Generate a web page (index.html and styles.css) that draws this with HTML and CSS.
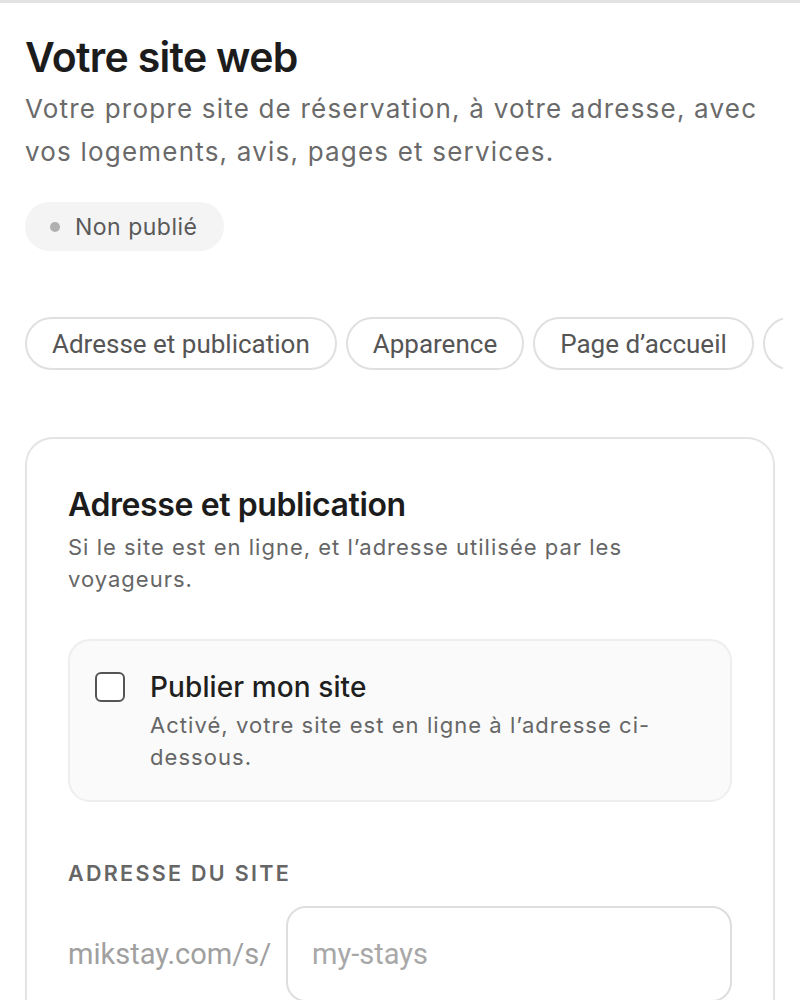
FILE: index.html
```html
<!DOCTYPE html>
<html lang="fr">
<head>
<meta charset="utf-8">
<title>Votre site web</title>
<link rel="stylesheet" href="styles.css">
</head>
<body>
<div class="page">
  <header class="intro">
    <h1 class="title">Votre site web</h1>
    <p class="lead">Votre propre site de réservation, à votre adresse, avec vos logements, avis, pages et services.</p>
    <span class="status"><span class="dot"></span>Non publié</span>
  </header>

  <nav class="tabs">
    <button class="tab">Adresse et publication</button>
    <button class="tab">Apparence</button>
    <button class="tab">Page d’accueil</button>
    <button class="tab">Logements</button>
  </nav>

  <section class="card">
    <h2 class="card-title">Adresse et publication</h2>
    <p class="card-desc">Si le site est en ligne, et l’adresse utilisée par les voyageurs.</p>

    <label class="option">
      <span class="check"></span>
      <span class="option-text">
        <span class="option-title">Publier mon site</span>
        <span class="option-desc">Activé, votre site est en ligne à l’adresse ci-dessous.</span>
      </span>
    </label>

    <div class="field">
      <div class="field-label">ADRESSE DU SITE</div>
      <div class="url-row">
        <span class="prefix">mikstay.com/s/</span>
        <div class="input"><span class="placeholder">my-stays</span></div>
      </div>
    </div>
  </section>
</div>
</body>
</html>
```

FILE: styles.css
```css
* { box-sizing: border-box; }
html { overflow: hidden; height: 1000px; }
html, body { margin: 0; padding: 0; background: #fff; }
body {
  font-family: Inter, "Noto Sans", sans-serif;
  color: #1e1e1e;
  border-top: 3px solid #e2e2e2;
  overflow: hidden;
  height: 1000px;
}
.page { padding: 28px 0 0 25px; }

.title {
  margin: 0;
  font-size: 41px;
  font-weight: 600;
  letter-spacing: -0.7px;
  line-height: 52px;
  color: #1c1c1c;
}
.lead {
  margin: 4px 0 0;
  font-size: 26px;
  letter-spacing: 1.2px;
  line-height: 43px;
  color: #6a6a6a;
  max-width: 760px;
}
.status {
  margin-top: 29px;
  display: inline-flex;
  align-items: center;
  gap: 15px;
  height: 49px;
  padding: 0 26px 0 25px;
  border-radius: 25px;
  background: #f4f4f4;
  font-size: 23px;
  letter-spacing: 0.5px;
  color: #595959;
}
.dot { width: 10px; height: 10px; border-radius: 50%; background: #b0b0b0; }

.tabs {
  margin-top: 66px;
  width: 758px;
  display: flex;
  gap: 9px;
  overflow: hidden;
  white-space: nowrap;
}
.tab {
  flex: none;
  height: 53px;
  padding: 0 25px;
  border: 2px solid #e0e0e0;
  border-radius: 27px;
  background: #fff;
  font-family: Roboto, "Liberation Sans", sans-serif;
  font-size: 26px;
  color: #555;
}

.card {
  margin-top: 67px;
  width: 750px;
  height: 600px;
  border: 2px solid #e4e4e4;
  border-radius: 28px;
  padding: 46px 41px 0 41px;
}
.card-title {
  margin: 0;
  font-size: 32px;
  font-weight: 600;
  letter-spacing: -0.4px;
  line-height: 40px;
  color: #1c1c1c;
}
.card-desc {
  margin: 6px 0 0;
  font-size: 22px;
  letter-spacing: 1px;
  line-height: 32px;
  color: #666;
  max-width: 600px;
}
.option {
  margin-top: 44px;
  display: flex;
  gap: 25px;
  background: #fafafa;
  border: 2px solid #eeeeee;
  border-radius: 22px;
  padding: 29px 30px 26px 25px;
  min-height: 163px;
}
.check {
  flex: none;
  width: 30px;
  height: 30px;
  margin-top: 2px;
  border: 2px solid #555;
  border-radius: 6px;
  background: #fff;
}
.option-text { display: flex; flex-direction: column; }
.option-title { font-size: 28px; font-weight: 500; letter-spacing: 0.1px; line-height: 34px; color: #1f1f1f; }
.option-desc { margin-top: 5px; font-size: 22px; letter-spacing: 1.05px; line-height: 32px; color: #666; max-width: 520px; }

.field { margin-top: 58px; }
.field-label {
  font-size: 21.5px;
  font-weight: 600;
  letter-spacing: 2.3px;
  color: #666;
  line-height: 26px;
}
.url-row {
  margin-top: 20px;
  display: flex;
  align-items: center;
  gap: 15px;
}
.prefix {
  font-family: Roboto, "Liberation Sans", sans-serif;
  font-size: 29px;
  color: #a0a0a0;
}
.input {
  flex: 1;
  height: 96px;
  border: 2px solid #dedede;
  border-radius: 20px;
  padding: 0 24px;
  display: flex;
  align-items: center;
}
.placeholder {
  font-family: Roboto, "Liberation Sans", sans-serif;
  font-size: 29px;
  color: #a8a8a8;
}
```
